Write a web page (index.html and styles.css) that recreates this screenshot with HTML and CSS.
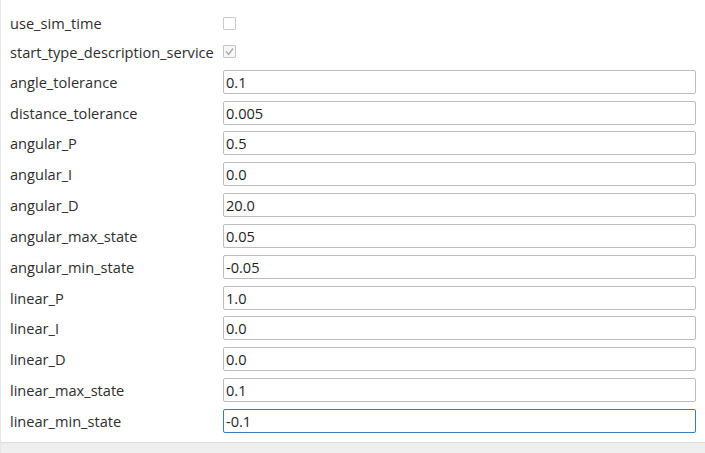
FILE: index.html
```html
<!DOCTYPE html>
<html>
<head>
<meta charset="utf-8">
<link rel="stylesheet" href="styles.css">
</head>
<body>
<div class="panel">
  <div class="form">
    <div class="row check-row"><span class="label">use_sim_time</span><span class="checkbox"></span></div>
    <div class="row check-row"><span class="label">start_type_description_service</span><span class="checkbox checked disabled"><svg viewBox="0 0 13 13" width="13" height="13"><path d="M3 6.5 L5.5 9.5 L10 3.5" fill="none" stroke="#a8a8a8" stroke-width="1.3"/></svg></span></div>
    <div class="row"><span class="label">angle_tolerance</span><span class="field">0.1</span></div>
    <div class="row"><span class="label">distance_tolerance</span><span class="field">0.005</span></div>
    <div class="row"><span class="label">angular_P</span><span class="field">0.5</span></div>
    <div class="row"><span class="label">angular_I</span><span class="field">0.0</span></div>
    <div class="row"><span class="label">angular_D</span><span class="field">20.0</span></div>
    <div class="row"><span class="label">angular_max_state</span><span class="field">0.05</span></div>
    <div class="row"><span class="label">angular_min_state</span><span class="field">-0.05</span></div>
    <div class="row"><span class="label">linear_P</span><span class="field">1.0</span></div>
    <div class="row"><span class="label">linear_I</span><span class="field">0.0</span></div>
    <div class="row"><span class="label">linear_D</span><span class="field">0.0</span></div>
    <div class="row"><span class="label">linear_max_state</span><span class="field">0.1</span></div>
    <div class="row"><span class="label">linear_min_state</span><span class="field focused">-0.1</span></div>
  </div>
  <div class="footer"></div>
</div>
</body>
</html>
```
FILE: styles.css
```css
html, body {
  margin: 0;
  padding: 0;
  background: #ffffff;
}
body {
  width: 705px;
  height: 453px;
  overflow: hidden;
  font-family: "Open Sans", "DejaVu Sans", sans-serif;
  font-size: 14.6px;
  color: #2e2e2e;
}
.panel {
  display: flex;
  flex-direction: column;
  height: 453px;
  border-left: 1px solid #e6e6e6;
  box-sizing: border-box;
}
.form {
  flex: 1;
  display: flex;
  flex-direction: column;
  gap: 6.85px;
  padding: 12px 9px 0 9px;
}
.row {
  display: grid;
  grid-template-columns: 213px 1fr;
  align-items: center;
  height: 24px;
}
.check-row {
  height: 22px;
}
.label {
  white-space: nowrap;
  line-height: 20px;
}
.checkbox {
  width: 13px;
  height: 13px;
  box-sizing: border-box;
  border: 1px solid #c8c8c8;
  border-radius: 1px;
  background: #ffffff;
  position: relative;
}
.checkbox.disabled {
  background: #f7f7f7;
  border-color: #c4c4c4;
}
.checkbox svg {
  position: absolute;
  left: -1px;
  top: -1px;
}
.field {
  height: 24px;
  box-sizing: border-box;
  border: 1px solid #bdbdbd;
  border-radius: 2px;
  padding: 0 2px;
  line-height: 22px;
  background: #ffffff;
  display: flex;
  align-items: center;
  color: #1e1e1e;
}
.field.focused {
  border-color: #3a7cb8;
}
.footer {
  height: 10px;
  background: #efefef;
  border-top: 1px solid #dedede;
}
```
